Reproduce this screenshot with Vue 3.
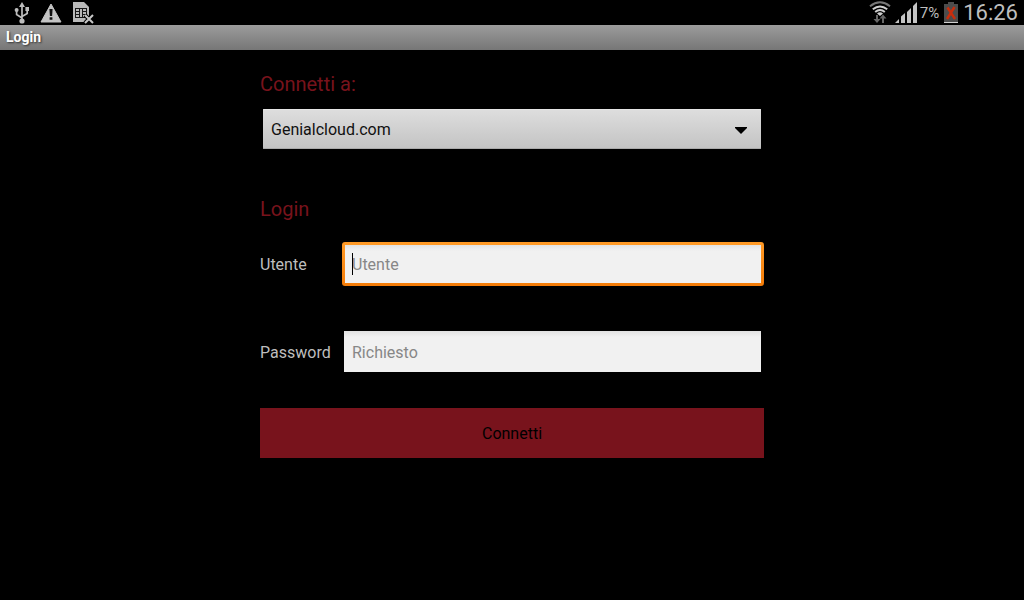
<script setup>
import { ref } from 'vue'

const server = ref('Genialcloud.com')
const user = ref('')
const password = ref('')
</script>

<template>
  <div class="screen">
    <header class="status">
      <div class="group left">
        <svg class="usb" width="16" height="22" viewBox="0 0 16 22" aria-label="USB">
          <g fill="none" stroke="#bdbdbd" stroke-width="1.7">
            <path d="M8 4V19M8 16L2.6 12.5V9M8 14.5L13.2 11.5V7" />
          </g>
          <g fill="#bdbdbd">
            <path d="M8 0L11 5H5Z" />
            <circle cx="2.6" cy="8" r="2" />
            <path d="M11.4 5H15V9H11.4Z" />
            <circle cx="8" cy="19" r="2.6" />
          </g>
        </svg>
        <svg class="warn" width="22" height="20" viewBox="0 0 22 20" aria-label="Warning">
          <path d="M11 1L21 19H1Z" fill="#c4c4c4" stroke="#c4c4c4" stroke-linejoin="round" />
          <path d="M9.4 6H12.6L12.1 13H9.9ZM9.6 14.3H12.4V16.8H9.6Z" fill="#111" />
        </svg>
        <svg class="sim" width="21" height="22" viewBox="0 0 21 22" aria-label="No SIM">
          <path d="M0 0H11L16 5V20H0Z" fill="#b9b9b9" />
          <path d="M2 6H14V16H2Z" fill="#181818" />
          <path d="M3 7H6V9H3ZM3 10H6V12H3ZM3 13H6V15H3ZM7 7H9V15H7ZM10 7H13V9H10ZM10 10H13V12H10ZM10 13H13V15H10Z" fill="#b9b9b9" />
          <path d="M12 13L20 21M20 13L12 21" stroke="#000" stroke-width="4" />
          <path d="M12 13L20 21M20 13L12 21" stroke="#c8c8c8" stroke-width="2" />
        </svg>
      </div>
      <div class="group right">
        <svg class="wifi" width="22" height="23" viewBox="0 0 22 23" aria-label="Wi-Fi">
          <g fill="none" stroke-width="2">
            <path d="M1 5.2Q11 -2.6 21 5.2" stroke="#777" />
            <path d="M3.8 8.3Q11 2.6 18.2 8.3" stroke="#cfcfcf" />
            <path d="M6.2 11Q11 7 15.8 11" stroke="#cfcfcf" />
          </g>
          <path d="M8 12.4Q11 10 14 12.4L11 15Z" fill="#cfcfcf" />
          <path d="M8 14V20M14 22V16" stroke="#666" stroke-width="2" />
          <path d="M4.5 18H11.5L8 22ZM10.5 17.5H17.5L14 13.5Z" fill="#666" />
        </svg>
        <svg class="signal" width="23" height="22" viewBox="0 0 23 22" aria-label="Signal">
          <path d="M0 21L4 17V21Z" fill="#c4c4c4" />
          <path d="M6 14.5L10 11V21H6Z" fill="#c4c4c4" />
          <path d="M12 10L16 6V21H12Z" fill="#c4c4c4" />
          <path d="M18 4L22 0V21H18Z" fill="#c4c4c4" />
        </svg>
        <span class="percent">7%</span>
        <svg class="battery" width="14" height="21" viewBox="0 0 14 21" aria-label="Battery">
          <path d="M4 0H10V2H14V21H0V2H4Z" fill="#4c4c4c" />
          <path d="M0 20H14V21H0Z" fill="#d0d0d0" />
          <path d="M3.5 5.5L11 17M10.5 5L3 17" stroke="#c92d0c" stroke-width="2.4" />
        </svg>
        <time class="clock">16:26</time>
      </div>
    </header>
    <h1 class="title">Login</h1>

    <form class="form" @submit.prevent>
      <h2 class="heading"><label for="server">Connetti a:</label></h2>
      <div class="picker">
        <select id="server" v-model="server">
          <option>Genialcloud.com</option>
        </select>
        <svg class="arrow" width="12" height="7" viewBox="0 0 12 7" aria-hidden="true">
          <path d="M0 0H12V1L6 7L0 1Z" fill="#000" />
        </svg>
      </div>

      <h2 class="heading second">Login</h2>
      <div class="row">
        <label for="user">Utente</label>
        <div class="field active">
          <input id="user" v-model="user" type="text" placeholder="Utente" />
          <span class="caret"></span>
        </div>
      </div>
      <div class="row last">
        <label for="password">Password</label>
        <div class="field plain">
          <input id="password" v-model="password" type="password" placeholder="Richiesto" />
        </div>
      </div>
      <button class="submit" type="submit">Connetti</button>
    </form>
  </div>
</template>

<style>
html,
body {
  background: #000;
}
</style>

<style scoped>
.screen {
  min-height: 100vh;
  background: #000;
  color: #bebebe;
  font-family: Roboto, "Noto Sans", sans-serif;
  font-size: 16px;
}

.status {
  display: flex;
  justify-content: space-between;
  height: 25px;
}

.group {
  display: flex;
  align-items: center;
}

.group svg {
  display: block;
  flex: none;
}

.left {
  padding-left: 14px;
}

.warn {
  margin-left: 10px;
}

.sim {
  margin-left: 11px;
}

.right {
  padding-right: 6px;
  color: #bebebe;
}

.signal {
  margin-left: 4px;
}

.percent {
  margin-left: 2px;
  font-size: 15px;
}

.battery {
  margin-left: 5px;
}

.clock {
  margin-left: 5px;
  font-size: 22px;
  line-height: 24px;
}

.title {
  margin: 0;
  padding-left: 6px;
  height: 25px;
  background: linear-gradient(#9c9c9c, #767676);
  color: #fff;
  font-size: 14px;
  font-weight: 700;
  line-height: 25px;
  text-shadow: 1px 1px 2px #333;
}

.form {
  box-sizing: border-box;
  width: 504px;
  max-width: 100%;
  margin: 0 auto;
  padding-top: 22px;
}

.heading {
  margin: 0;
  color: #78131c;
  font-size: 20px;
  font-weight: 400;
  line-height: 24px;
}

.second {
  margin-top: 48px;
}

.picker {
  position: relative;
  margin: 13px 3px 0;
}

.picker select {
  display: block;
  box-sizing: border-box;
  width: 100%;
  height: 40px;
  padding: 0 40px 0 8px;
  border: 0;
  border-radius: 1px;
  background: linear-gradient(#dedede, #c3c3c3);
  box-shadow: inset 0 1px #e6e6e6, inset 0 -1px #aaa;
  color: #111;
  font: inherit;
  appearance: none;
}

.arrow {
  position: absolute;
  top: 18px;
  right: 14px;
  pointer-events: none;
}

.row {
  display: grid;
  grid-template-columns: 82px 1fr;
  align-items: center;
  height: 44px;
  margin-top: 21px;
}

.last {
  height: 46px;
  margin-top: 43px;
}

.field {
  position: relative;
}

.field input {
  display: block;
  box-sizing: border-box;
  width: 100%;
  border: 0;
  border-radius: 0;
  outline: 0;
  background: linear-gradient(#e2e2e2, #f1f1f1 6px);
  color: #111;
  font: inherit;
}

.field input::placeholder {
  color: #878787;
  opacity: 1;
}

.active {
  padding: 3px;
  border-radius: 3px;
  background: linear-gradient(#ff9a26, #f47c08);
}

.active input {
  height: 38px;
  padding: 0 7px;
}

.plain {
  margin: 2px 3px 3px 2px;
}

.plain input {
  height: 41px;
  padding: 1px 8px 0;
}

.caret {
  position: absolute;
  top: 11px;
  left: 10px;
  width: 1px;
  height: 22px;
  background: #000;
}

.submit {
  display: block;
  width: 100%;
  height: 50px;
  margin-top: 33px;
  padding: 0;
  border: 0;
  background: #78131c;
  color: #000;
  font: inherit;
}
</style>
